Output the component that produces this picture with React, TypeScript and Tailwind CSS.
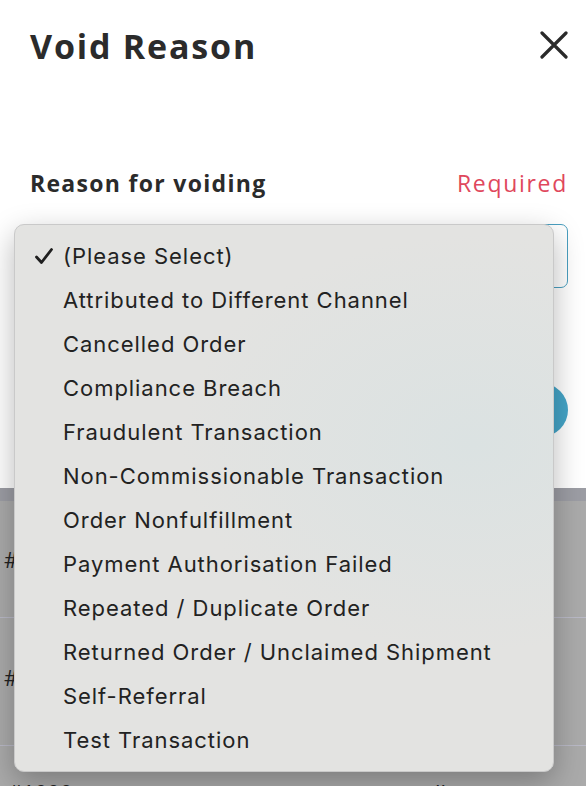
import * as React from 'react';

const reasons = [
  '(Please Select)',
  'Attributed to Different Channel',
  'Cancelled Order',
  'Compliance Breach',
  'Fraudulent Transaction',
  'Non-Commissionable Transaction',
  'Order Nonfulfillment',
  'Payment Authorisation Failed',
  'Repeated / Duplicate Order',
  'Returned Order / Unclaimed Shipment',
  'Self-Referral',
  'Test Transaction',
];

const CloseIcon = () => (
  <svg width="28" height="28" viewBox="0 0 28 28" fill="none" className="mt-[7px]">
    <path d="M2 2L26 26M26 2L2 26" stroke="#2a2a2a" strokeWidth="3.2" strokeLinecap="round" />
  </svg>
);

const Check = () => (
  <svg width="20" height="18" viewBox="0 0 20 18" fill="none">
    <path d="M2.5 10L7.5 15.5L17.5 2.5" stroke="#1f1f1f" strokeWidth="2.8" strokeLinecap="round" strokeLinejoin="round" />
  </svg>
);

export default function App() {
  return (
    <div className="relative w-[586px] h-[786px] overflow-hidden bg-white font-['Open_Sans',sans-serif]">
      {/* modal body */}
      <div className="h-[488px] pl-[30px] pr-[18px] pt-[24px]">
        <div className="flex items-start justify-between">
          <h1 className="text-[34px] leading-[44px] font-bold tracking-[1.8px] text-[#2b2b2b]">Void Reason</h1>
          <CloseIcon />
        </div>
        <div className="mt-[100px] flex items-center justify-between">
          <span className="text-[23px] leading-[30px] font-bold tracking-[1.3px] text-[#2b2b2b]">Reason for voiding</span>
          <span className="text-[23px] leading-[30px] tracking-[1.7px] text-[#e0475c]">Required</span>
        </div>
        <div className="mt-[26px] h-[64px] rounded-[7px] border border-[#4a9fc0] bg-white" />
        <div className="mt-[95px] flex justify-end">
          <div className="h-[54px] w-[220px] rounded-full bg-[#45a5c8]" />
        </div>
      </div>

      {/* dimmed list behind */}
      <div className="bg-[#aaaaaa] h-[298px]">
        <div className="h-[13px] bg-[#9c9da4]" />
        <div className="h-[117px] border-b border-[#b9b9c6] flex items-center pl-[4px]">
          <span className="text-[22px] text-[#222]">#1002</span>
        </div>
        <div className="h-[128px] border-b border-[#b9b9c6] flex items-center pl-[4px] pb-[8px]">
          <span className="text-[22px] text-[#222]">#1001</span>
        </div>
        <div className="flex justify-between pl-[8px] pr-[140px] pt-[30px]">
          <span className="text-[22px] text-[#222]">#1000</span>
          <span className="text-[22px] text-[#222]">ll</span>
        </div>
      </div>

      {/* native select menu */}
      <div className="absolute left-[14px] top-[224px] w-[540px] h-[548px] rounded-[10px] border border-[#c9c9c9] bg-[#e3e3e1] bg-[radial-gradient(ellipse_at_85%_40%,#dbe2e2_0%,#e3e3e1_45%)] shadow-[0_10px_30px_rgba(0,0,0,0.28)] py-[9px] font-['Inter',sans-serif]">
        {reasons.map((r, i) => (
          <div key={r} className="relative h-[44px] flex items-center pl-[48px] text-[22px] tracking-[0.95px] text-[#222]">
            {i === 0 && (
              <span className="absolute left-[19px] top-[13px]">
                <Check />
              </span>
            )}
            {r}
          </div>
        ))}
      </div>
    </div>
  );
}
